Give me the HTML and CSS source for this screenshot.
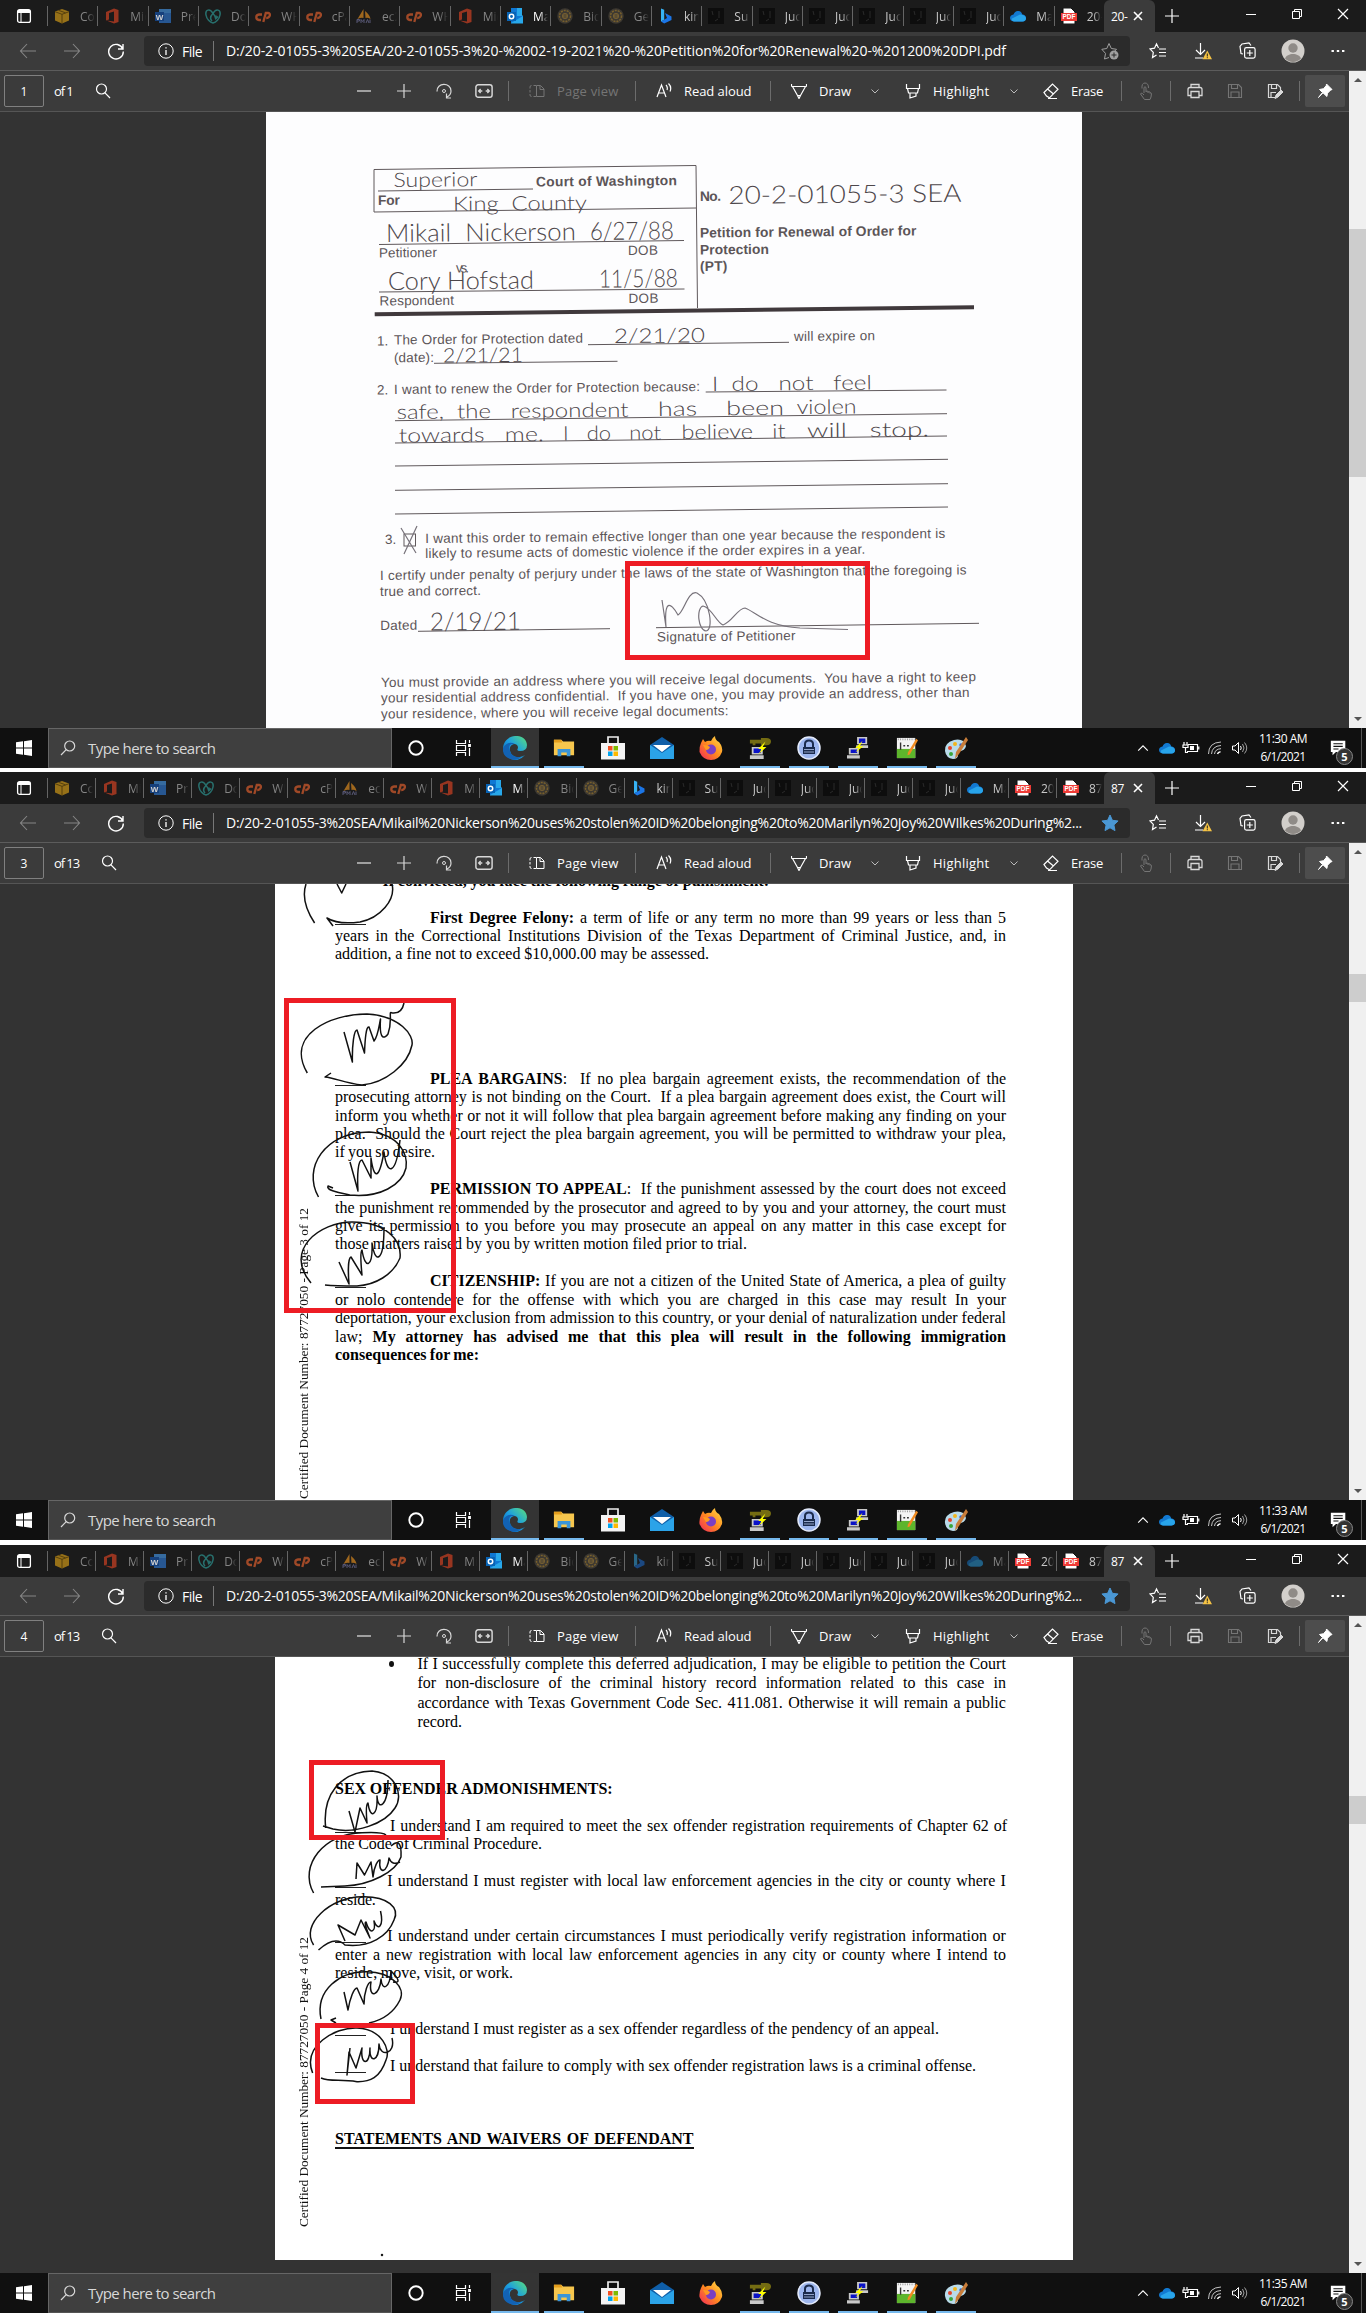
FILE: index.html
```html
<!DOCTYPE html>
<html lang="en">
<head>
<meta charset="utf-8">
<title>Documents</title>
<link rel="stylesheet" href="styles.css">
</head>
<body>
<svg class="defs" aria-hidden="true">
<defs>
<linearGradient id="gEdge" x1="0" y1="1" x2="1" y2="0"><stop offset="0" stop-color="#0c59a4"/><stop offset=".5" stop-color="#1b9de2"/><stop offset="1" stop-color="#5be07a"/></linearGradient>
<linearGradient id="gFox" x1="1" y1="0" x2="0" y2="1"><stop offset="0" stop-color="#ffe14a"/><stop offset=".5" stop-color="#ff8a1f"/><stop offset="1" stop-color="#f0245c"/></linearGradient>
</defs>
<symbol id="i-tabs" viewBox="0 0 16 16"><rect x="1.6" y="1.6" width="12.8" height="12.8" rx="2" stroke-width="1.3"/><path d="M2 3.500h12" stroke-width="3"/><path d="M5 4v10"/></symbol>
<symbol id="i-plus" viewBox="0 0 16 16"><path d="M8 1v14M1 8h14" stroke-width="1.2"/></symbol>
<symbol id="i-min" viewBox="0 0 16 16"><path d="M3 8.500h10"/></symbol>
<symbol id="i-minus" viewBox="0 0 16 16"><path d="M1 8h14" stroke-width="1.3"/></symbol>
<symbol id="i-max" viewBox="0 0 16 16"><path d="M3.500 5.500h7v7h-7zM5.500 5.500v-2h7v7h-2"/></symbol>
<symbol id="i-close" viewBox="0 0 16 16"><path d="M3 3l10 10M13 3L3 13" stroke-width="1.2"/></symbol>
<symbol id="i-x" viewBox="0 0 12 12"><path d="M2 2l8 8M10 2L2 10" stroke-width="1.6"/></symbol>
<symbol id="i-back" viewBox="0 0 18 16"><path d="M17 8H1.500M8 1L1.500 8L8 15" stroke-width="1.1"/></symbol>
<symbol id="i-fwd" viewBox="0 0 18 16"><path d="M1 8h15.500M10 1l6.500 7L10 15" stroke-width="1.1"/></symbol>
<symbol id="i-reload" viewBox="0 0 18 18"><path d="M15.800 7A7.300 7.300 0 1 0 16.300 9.500M16 2v5h-5" stroke-width="1.4"/></symbol>
<symbol id="i-info" viewBox="0 0 16 16"><circle cx="8" cy="8" r="7.200"/><path d="M8 7v5M8 4.200v1.300" stroke-width="1.300"/></symbol>
<symbol id="i-staradd" viewBox="0 0 18 18"><path d="M8 15.500l-4.500 1.500 1-5.600L.8 7.300l5-.8L8 1.500l2.300 5 5.200.8-2 2"/><circle cx="13" cy="13" r="4.500" fill="currentColor" stroke="none"/><path d="M13 10.500v5M10.500 13h5" stroke="#2b2b2b"/></symbol>
<symbol id="i-starfull" viewBox="0 0 18 18"><path d="M9 1l2.400 5.300 5.700.7-4.200 3.900 1.100 5.700L9 13.800l-5 2.800 1.100-5.700L.9 7l5.700-.7z" fill="#4a97d4" stroke="#4a97d4"/></symbol>
<symbol id="i-favs" viewBox="0 0 18 18"><path d="M9.500 6L7.500 1.800 5.500 6.200 1 7l3.300 3.400-.8 5.200L7.500 13M10 7h7M10 10.500h7M10 14h7" stroke-width="1.200"/></symbol>
<symbol id="i-down" viewBox="0 0 18 18"><path d="M6.500 1v11M2 8l4.500 4.500L11 8M1 16h8" stroke-width="1.200"/><path d="M13.300 8.500L18 17.300H8.500z" fill="#f5c344" stroke="none"/><path d="M13.300 11.500v3M13.300 15.200v1" stroke="#222"/></symbol>
<symbol id="i-coll" viewBox="0 0 18 18"><path d="M4 12L2 11.500 1 4.500 3 2l7-1 2 2.500" stroke-width="1.200"/><rect x="5.600" y="5.600" width="10.500" height="10.500" rx="1.800" stroke-width="1.200"/><path d="M10.800 8v6M7.800 11h6" stroke-width="1.200"/></symbol>
<symbol id="i-avatar" viewBox="0 0 24 24"><circle cx="12" cy="12" r="11.500" fill="#d2cfcb" stroke="none"/><circle cx="12" cy="9" r="4.700" fill="#8f8b87" stroke="none"/><path d="M4 19.500c2-6 14-6 16 0a11 11 0 0 1-16 0z" fill="#8f8b87" stroke="none"/></symbol>
<symbol id="i-dots" viewBox="0 0 16 16"><path d="M1.500 8h2.400M6.800 8h2.400M12 8h2.400" stroke-width="2.200"/></symbol>
<symbol id="i-search" viewBox="0 0 16 16"><circle cx="6.500" cy="6" r="5" stroke-width="1.200"/><path d="M10 9.800l5 5.200" stroke-width="1.200"/></symbol>
<symbol id="i-find" viewBox="0 0 16 16"><circle cx="9.700" cy="6" r="5" stroke-width="1.200"/><path d="M6.200 9.600L1 15" stroke-width="1.200"/></symbol>
<symbol id="i-rotate" viewBox="0 0 16 16"><path d="M1 8.500C.5-.8 15-.8 15 8c0 2.500-1.500 4.800-4 6M10.500 10.500V15h4.500" stroke-width="1.200"/><circle cx="8" cy="8" r="1.500"/></symbol>
<symbol id="i-fit" viewBox="0 0 16 16"><rect x=".8" y="2.500" width="14.400" height="11" rx="2" stroke-width="1.300"/><path d="M6.500 8H3.500M9.500 8h3M5 6.300L3.300 8 5 9.700M11 6.300L12.700 8 11 9.700" stroke-width="1.200"/></symbol>
<symbol id="i-pages" viewBox="0 0 16 16"><path d="M7 2.500H4.500M1 5.500v-1.500q0-1.500 1.500-1.500M1 7v2.500M1 11v1q0 1.500 1.500 1.500M4.500 13.500H7M7.500 2.500h4l3.500 3.500v7.500h-7.500zM11 2.500V6.500h4"/></symbol>
<symbol id="i-read" viewBox="0 0 16 16"><path d="M1 14L5.500 2 10 14M2.500 10h6M10 2q2 2 1 5M12.500.5q3.500 3.500 1.500 8" stroke-width="1.200"/></symbol>
<symbol id="i-pen" viewBox="0 0 16 16"><path d="M.5 1v2.500M15.500 1v2.500M.5 3.500h15M1.500 3.500L6.500 12.500h3L14.500 3.500M6.500 12.500l1.500 3 1.500-3" stroke-width="1.200"/></symbol>
<symbol id="i-marker" viewBox="0 0 16 16"><path d="M1.500 1v4.500h13V1M2.500 5.500l1 4.500h9l1-4.500M5 10v5l6-2v-3" stroke-width="1.200"/></symbol>
<symbol id="i-erase" viewBox="0 0 16 16"><path d="M1 9.500L9.500 1 15 6.200 6.500 14.800 3.500 13zM4.500 6l6 5M5 15.500h9" stroke-width="1.200"/></symbol>
<symbol id="i-hand" viewBox="0 0 16 18"><path d="M6 11V5.500q1-1.500 2 0V10M8 9.500q1.200-1 2 0v1.500M10 10q1.200-1 2 .3v1.200M12 11q1.200-.8 1.500.5L13 15l-1 2.500H6.500L2.500 12q.5-1.500 2-.5L6 13M4 6.500Q3.500 1 7 1t3.500 5"/></symbol>
<symbol id="i-print" viewBox="0 0 16 16"><path d="M4 4.500V1.500h8v3M4 12.500H1V6.500q0-2 2-2h10q2 0 2 2v6h-3M4 8.500h8v6H4z" stroke-width="1.300"/></symbol>
<symbol id="i-save" viewBox="0 0 16 16"><path d="M1.500 1.500h10l3 3v10h-13zM4.500 1.500v4h6v-4M4 14.500v-5.500h8v5.500" stroke-width="1.100"/></symbol>
<symbol id="i-saveas" viewBox="0 0 16 16"><path d="M8 14.500H1.500v-13h9l3 3V7M4.500 1.500v4h5v-4M4 14.500v-5h5" stroke-width="1.200"/><path d="M8 15.500l1-3.500 5-5 2 2-5 5z" fill="currentColor"/></symbol>
<symbol id="i-pin" viewBox="0 0 16 16"><path d="M9.500 1l5.500 5.500-1.500.7-3 3-.6 3.300L6 9.800 1.500 14.500 5.500 9.500 2.500 6.500l4-.8 2.700-3z" fill="currentColor"/></symbol>
<symbol id="i-chev" viewBox="0 0 10 10"><path d="M1.500 3.500L5 7l3.500-3.500"/></symbol>
<symbol id="i-up" viewBox="0 0 16 16"><path d="M2.500 11L8 5.500l5.500 5.500" stroke-width="1.300"/></symbol>
<symbol id="i-cortana" viewBox="0 0 18 18"><circle cx="9" cy="9" r="6.700" stroke-width="1.900"/></symbol>
<symbol id="i-task" viewBox="0 0 18 18"><path d="M1.500 1v3.500h9V1M1.500 17v-3.500h9V17M1.500 6.500h9v5h-9zM14.500 1v3M14.500 9v8" stroke-width="1.200"/><path d="M14.500 5v3" stroke-width="2.800"/></symbol>
<symbol id="i-batt" viewBox="0 0 18 14"><path d="M6 3.500h9.500v7H5M16.800 5.500v3M2 1v3M5 1v3M1 4h5v2.500H1zM3.500 7v4.500H6" stroke-width="1.200"/><path d="M8 5h4v4H8z" fill="currentColor" stroke="none"/></symbol>
<symbol id="i-wifi" viewBox="0 0 16 16"><path d="M1.500 14Q1.500 2.500 14 2M4.500 14Q5 6 14 5.500M7.500 14Q8 9 14 8.700" opacity=".75"/><path d="M10.500 14Q11 12 13.500 11.700" stroke-width="1.500"/></symbol>
<symbol id="i-vol" viewBox="0 0 17 16"><path d="M1.500 6h2.500L7.500 2.500v11L4 10H1.500zM9.500 6q1.500 2 0 4"/><path d="M11.500 4q3 4 0 8M13.500 2.500q4.500 5.500 0 11" opacity=".6"/></symbol>
<symbol id="f-box" viewBox="0 0 16 16"><path d="M1 3.500L8 1l7 2.500V12.500L8 15.500 1 12.500z" fill="#b68718"/><path d="M8 6v9.500M1 3.700L8 6.300l7-2.600M4.500 2.300l7 2.500" stroke="#65490b" fill="none"/></symbol>
<symbol id="f-office" viewBox="0 0 16 16"><path d="M2 4l8-3.500 4.500 1.500v12L10 15.500l-7.500-3 7.500 1V3.500L5 5v6.500L2 12.500z" fill="#b83c22"/></symbol>
<symbol id="f-word" viewBox="0 0 16 16"><path d="M4 1h12v14H4z" fill="#2b66b0"/><path d="M4 1h12v4H4z" fill="#3d7fc0"/><path d="M0 4h9v9H0z" fill="#164a95"/></symbol>
<symbol id="f-dad" viewBox="0 0 16 16"><path d="M8 5.500C5 0 0 1.500 1 7c.6 4 4 7.500 7 8 3-.5 6.400-4 7-8 1-5.500-4-7-7-1.500-3 3-3 5.500-1 7.500M8 5.500q3 3 2.500 5.500M11 7.500v3l2-2" fill="none" stroke="#2b8582" stroke-width="1.500"/></symbol>
<symbol id="f-cp" viewBox="0 0 16 16"><path d="M7 6.500H4q-2.700.3-2.700 2.700T4 12h2M8.300 14L10.800 5h2.400q2.200.3 1.600 2.700-.8 2.300-3.600 2.300" fill="none" stroke="#c2552b" stroke-width="2.300"/></symbol>
<symbol id="f-sail" viewBox="0 0 16 16"><path d="M7.500 1L1.500 11q4-2 6-1zM9 3q5 4 5.500 8-3-2-5-1z" fill="#c07a1e"/><path d="M1 15v-3.500h2.500v1.500H1m4 2v-3.500l1.500 2 1.500-2V15m2 0l1.500-3.500L13 15m1 0v-3.500" stroke="#67678c" fill="none"/></symbol>
<symbol id="f-outlook" viewBox="0 0 16 16"><path d="M4 0h11v7l1 1v7.500H4z" fill="#28a8ea"/><path d="M4 0h6v8h6l-12 7z" fill="#0f78d4"/><path d="M0 4h9v9H0z" fill="#0864b5"/><circle cx="4.500" cy="8.500" r="2.200" fill="none" stroke="#fff" stroke-width="1.500"/></symbol>
<symbol id="f-seal" viewBox="0 0 16 16"><circle cx="8" cy="8" r="7.700" fill="#454038"/><circle cx="8" cy="8" r="5.500" fill="none" stroke="#907130" stroke-dasharray="2 1" stroke-width="1.500"/><circle cx="8" cy="8" r="3" fill="#8f7238"/><path d="M6.500 7h3M6.500 9h3" stroke="#454038"/></symbol>
<symbol id="f-bing" viewBox="0 0 16 16"><path d="M3 .5l3.200 1.300v10L3 13.500z" fill="#37b3f4"/><path d="M7 5l6.500 3.500v3.500L6.200 15.500 3 13.500l6-3.500z" fill="#1b75e6"/></symbol>
<symbol id="f-dark" viewBox="0 0 16 16"><path d="M0 0h16v16H0z" fill="#0d0d0d"/><path d="M4 3l1 4M11 3v7M7 13l3-2" stroke="#2a2a2a"/></symbol>
<symbol id="f-cloud" viewBox="0 0 16 16"><path d="M4 13.500Q0 13 0 10t3.500-3.500Q5 2.500 8.500 3q3 .3 3.700 3.500 3.600 0 3.800 3.500 0 3.200-3.500 3.500z" fill="#1279d1"/><path d="M4 13.500Q1 13 2 10.500l8-4q5 0 6 3.500 0 3.200-3.500 3.500z" fill="#28a4ea"/></symbol>
<symbol id="f-pdf" viewBox="0 0 16 16"><path d="M2 0h8l4 4v12H2z" fill="#fff" stroke="#111"/><path d="M0 5h16v8H0z" fill="#ee3b36"/></symbol>
<symbol id="t-win" viewBox="0 0 16 16"><path d="M0 2.300l7-1v6.200H0zM8 1.200L16 0v7.500H8zM0 8.500h7v6.200l-7-1zM8 8.500h8V16l-8-1.200z" fill="#fff"/></symbol>
<symbol id="t-edge" viewBox="0 0 24 24"><path d="M0 12C1-3 23-4 24 9q0 6-7 6-4 0-2-3 0-4-4-4-5 1-4 7 2 7 10 6 3-.6 5-2Q16 26 9 23.500 0 20 0 12z" fill="url(#gEdge)"/><path d="M7 15q-3-8 5-7Q5 4 0 12q-1 9 9 11.500 6 1 9-2.500-9 1-11-6z" fill="#1262b4"/></symbol>
<symbol id="t-files" viewBox="0 0 24 24"><path d="M1 3h8l2 2h12v15H1z" fill="#f6c64d"/><path d="M1 3h8l1 3H1z" fill="#e39d1c"/><path d="M5 21v-8h14v8h-4v-4H9v4z" fill="#3a95d8"/></symbol>
<symbol id="t-store" viewBox="0 0 24 24"><path d="M7 7V1h10v6" fill="none" stroke="#eee" stroke-width="1.700"/><path d="M0 7h24v16.500H0z" fill="#f4f4f4"/><path d="M7 10h4.500v4.500H7z" fill="#f25022"/><path d="M12.500 10H17v4.500h-4.500z" fill="#7fba00"/><path d="M7 15.500h4.500V20H7z" fill="#00a4ef"/><path d="M12.500 15.500H17V20h-4.500z" fill="#ffb900"/></symbol>
<symbol id="t-mail" viewBox="0 0 24 24"><path d="M0 9L12 1l12 8v14H0z" fill="#0f5ea8"/><path d="M0 9l12 8 12-8v14H0z" fill="#2ba3e8"/><path d="M3 9h18l-9 7z" fill="#fff"/></symbol>
<symbol id="t-fox" viewBox="0 0 24 24"><path d="M2 7l2-4 2 3q3-2 6-1 1-3 4-5 0 4 4 6 4 5 3 10-3 8-11 8T.5 16Q0 11 2 7z" fill="url(#gFox)"/><circle cx="12" cy="13.500" r="5" fill="#7a3fc4"/><path d="M4 9q5 0 7 2-1 3-4 3" fill="#ff9a1f"/></symbol>
<symbol id="t-putkey" viewBox="0 0 24 24"><path d="M1 3h12V1h6q5 0 5 4t-5 4h-6V7H7v2H4V7H1z" fill="#746c12"/><path d="M3 11h12v8H3zM1 20h15v4H1z" fill="#c9c9c9"/><path d="M5 12.500h8v5H5z" fill="#0a12c8"/><path d="M18 5l-8 8h4l-4 6 9-8h-4z" fill="#ff0"/></symbol>
<symbol id="t-lock" viewBox="0 0 24 24"><circle cx="12" cy="12" r="11" fill="#9db6ee" stroke="#e3eafb" stroke-width="1.500"/><path d="M8 11V8q0-3.500 4-3.500T16 8v3" fill="none" stroke="#1b2b4d" stroke-width="2"/><path d="M6 11h12v7H6z" fill="#1b2b4d"/><path d="M7 13.500h10M7 16h10" stroke="#93a4c9"/></symbol>
<symbol id="t-putty" viewBox="0 0 24 24"><path d="M11 0h11v8H11zM10 9h13v3H10zM2 12h11v7H2zM0 20h14v3.500H0z" fill="#c9c9c9"/><path d="M13 1.500h7v5h-7zM4 13.500h7v4H4z" fill="#0a12c8"/><path d="M17 4l-8 8h4l-4 5 9-7h-4z" fill="#ff0"/></symbol>
<symbol id="t-note" viewBox="0 0 24 24"><path d="M1 1h20v22H1z" fill="#f4f4f4"/><path d="M1 13h20v10H1z" fill="#5db52c"/><path d="M5 6v8M8 9.500h2M12 9.500h2" stroke="#333" stroke-width="1.500"/><path d="M2 2.500h18" stroke="#999" stroke-dasharray="1 1.500" stroke-width="2"/><path d="M22 2l2 1.500L15 19l-2.500 1 .5-3z" fill="#f08c22"/></symbol>
<symbol id="t-paint" viewBox="0 0 24 24"><path d="M1 15Q0 7 10 4q10-2 12 6-1 5-7 5-3 1-1 4 0 4-5 4-7-1-8-8z" fill="#b9dbea"/><circle cx="6" cy="12" r="2" fill="#e4452c"/><circle cx="11" cy="8" r="2" fill="#f2b51c"/><circle cx="7" cy="18" r="2" fill="#3aa53a"/><circle cx="17" cy="9" r="1.700" fill="#2c62d6"/><path d="M22 1l2 3-9 14-4 5 1-7z" fill="#c87d3a"/></symbol>
<symbol id="t-notes" viewBox="0 0 20 20"><path d="M1 1h17v13H7l-4 4v-4H1z" fill="#fff"/><path d="M4 4.500h11M4 7.500h11M4 10.500h6" stroke="#111" stroke-width="1.200"/></symbol>
</svg>

<main class="stack">
<section class="screen" data-shot="0">
<div class="paper paper-form">
<svg class="scan" viewBox="266 112 816 616" width="816" height="616">
<g class="rules">
<path d="M374 169.500L696 165.500M374 169.500V212L696 208M696 165.500L697.500 308M378 191L533 189M379 244.500L684 240.500M379 292L684.500 289M588 344.700L789 342.300M434 363.300L617.500 361.300M705.700 392L946.500 390M395 420.700L947 413.700M395 443L947 436M395 466L948 459.300M395 490.300L948 483.700M395 514L948 507M418 631.300L610 628.700M656 627.700L979 623.300"/>
<path class="thick" d="M374.700 314.300L974 307.300"/>
<rect x="404" y="534" width="11.500" height="12"/>
</g>
<g class="bold">
<text x="536" y="186.500" textLength="141">Court of Washington</text>
<text x="378" y="205" textLength="22">For</text>
<text x="700" y="201" textLength="21">No.</text>
<text x="700" y="237.500" textLength="216.500">Petition for Renewal of Order for</text>
<text x="700" y="254.500" textLength="69">Protection</text>
<text x="700" y="271" textLength="27.500">(PT)</text>
</g>
<g class="body">
<text x="379" y="257.500" textLength="58">Petitioner</text>
<text x="628" y="255" textLength="30">DOB</text>
<text x="456" y="272.600" textLength="13">vs.</text>
<text x="379.600" y="305.500" textLength="74.500">Respondent</text>
<text x="628.500" y="303" textLength="30">DOB</text>
<text x="377" y="345.500">1.</text>
<text x="394" y="344.500" textLength="189">The Order for Protection dated</text>
<text x="794" y="341" textLength="81">will expire on</text>
<text x="394" y="362.300" textLength="40">(date):</text>
<text x="377" y="394.600">2.</text>
<text x="394" y="394" textLength="306">I want to renew the Order for Protection because:</text>
<text x="385" y="544">3.</text>
<text x="425.300" y="543" textLength="520">I want this order to remain effective longer than one year because the respondent is</text>
<text x="425.300" y="558" textLength="440">likely to resume acts of domestic violence if the order expires in a year.</text>
<text x="380" y="580" textLength="586.500">I certify under penalty of perjury under the laws of the state of Washington that the foregoing is</text>
<text x="380" y="596" textLength="101">true and correct.</text>
<text x="380.400" y="630" textLength="37">Dated</text>
<text x="657" y="641.500" textLength="138.500">Signature of Petitioner</text>
<text x="381" y="687" textLength="595" xml:space="preserve">You must provide an address where you will receive legal documents.  You have a right to keep</text>
<text x="381" y="702.500" textLength="588.500" xml:space="preserve">your residential address confidential.  If you have one, you may provide an address, other than</text>
<text x="381" y="718.500" textLength="347.600">your residence, where you will receive legal documents:</text>
</g>
<g class="hand">
<text x="393.500" y="187" textLength="84" lengthAdjust="spacingAndGlyphs">Superior</text>
<text x="453" y="211" textLength="134" lengthAdjust="spacingAndGlyphs">King&#160; County</text>
<text class="big" x="386" y="242" textLength="190" lengthAdjust="spacingAndGlyphs">Mikail&#160; Nickerson</text>
<text class="big" x="590" y="240" textLength="84" lengthAdjust="spacingAndGlyphs">6/27/88</text>
<text class="big" x="388" y="290" textLength="146" lengthAdjust="spacingAndGlyphs">Cory Hofstad</text>
<text class="big" x="599" y="287.500" textLength="79" lengthAdjust="spacingAndGlyphs">11/5/88</text>
<text class="big" x="728.600" y="204" textLength="233" lengthAdjust="spacingAndGlyphs">20-2-01055-3 SEA</text>
<text x="614" y="343" textLength="91" lengthAdjust="spacingAndGlyphs">2/21/20</text>
<text x="443" y="362.500" textLength="80" lengthAdjust="spacingAndGlyphs">2/21/21</text>
<text x="712" y="391" textLength="160" lengthAdjust="spacingAndGlyphs">I&#160; do&#160;&#160; not&#160;&#160; feel</text>
<text x="396.700" y="419" textLength="232" lengthAdjust="spacingAndGlyphs">safe,&#160; the&#160;&#160; respondent</text>
<text x="658" y="416" textLength="126" lengthAdjust="spacingAndGlyphs">has&#160;&#160;&#160; been</text>
<text x="796.700" y="414" textLength="60" lengthAdjust="spacingAndGlyphs">violen</text>
<text x="398.800" y="442.500" textLength="145" lengthAdjust="spacingAndGlyphs">towards&#160;&#160; me.</text>
<text x="563" y="440.500" textLength="98" lengthAdjust="spacingAndGlyphs">I&#160;&#160; do&#160;&#160; not</text>
<text x="681.600" y="439" textLength="104" lengthAdjust="spacingAndGlyphs">believe&#160;&#160; it</text>
<text x="807" y="437.500" textLength="122" lengthAdjust="spacingAndGlyphs">will&#160;&#160; stop.</text>
<text class="big" x="430" y="630.500" textLength="91" lengthAdjust="spacingAndGlyphs">2/19/21</text>
</g>
<path class="ink-gray" d="M401 528L416 553M417 526L404 554M662 600L666 627C664 600 670 601 678 615C684 612 688 590 697 593C710 600 714 630 706 631C698 630 696 608 703 606C712 608 716 622 723 625C732 622 738 608 745 608C756 612 766 626 800 628L848 629.500"/>
</svg>
<div class="mark mark-sign"></div>
</div>
</section>

<section class="screen" data-shot="1">
<div class="paper paper-plea">
<div class="copy copy-plea">
<p class="lead"><b class="ln" data-w="386.500">If convicted, you face the following range of punishment:</b></p>
<p><i class="blank"></i><span class="ln" data-w="576"><b>First Degree Felony:</b> a term of life or any term no more than 99 years or less than 5</span><br><span class="ln" data-w="671">years in the Correctional Institutions Division of the Texas Department of Criminal Justice, and, in</span><br><span class="ln" data-w="374">addition, a fine not to exceed $10,000.00 may be assessed.</span></p>
<p class="after-gap"><i class="blank"></i><span class="ln" data-w="576"><b>PLEA BARGAINS</b>:&nbsp; If no plea bargain agreement exists, the recommendation of the</span><br><span class="ln" data-w="671">prosecuting attorney is not binding on the Court.&nbsp; If a plea bargain agreement does exist, the Court will</span><br><span class="ln" data-w="671">inform you whether or not it will follow that plea bargain agreement before making any finding on your</span><br><span class="ln" data-w="671">plea.&nbsp; Should the Court reject the plea bargain agreement, you will be permitted to withdraw your plea,</span><br><span class="ln" data-w="100">if you so desire.</span></p>
<p><i class="blank"></i><span class="ln" data-w="576"><b>PERMISSION TO APPEAL</b>:&nbsp; If the punishment assessed by the court does not exceed</span><br><span class="ln" data-w="671">the punishment recommended by the prosecutor and agreed to by you and your attorney, the court must</span><br><span class="ln" data-w="671">give its permission to you before you may prosecute an appeal on any matter in this case except for</span><br><span class="ln" data-w="412">those matters raised by you by written motion filed prior to trial.</span></p>
<p><i class="blank"></i><span class="ln" data-w="576"><b>CITIZENSHIP:</b> If you are not a citizen of the United State of America, a plea of guilty</span><br><span class="ln" data-w="671">or nolo contendere for the offense with which you are charged in this case may result In your</span><br><span class="ln" data-w="671">deportation, your exclusion from admission to this country, or your denial of naturalization under federal</span><br><span class="ln" data-w="671">law; <b>My attorney has advised me that this plea will result in the following immigration</b></span><br><b class="ln" data-w="144">consequences for me:</b></p>
</div>
<div class="side side-plea"><span class="ln" data-h="291">Certified Document Number: 87727050 - Page 3 of 12</span></div>
<svg class="ink" viewBox="275 884 798 616" width="798" height="616">
<path d="M306 884C302 896 306 910 314.600 923M392 884C396 900 380 918 360 922C345 924 335 923 327 918L333 926M337 884L341.700 893L346 884"/>
<path d="M307.300 1073C285 1035 330 1014 367 1014C400 1016 414 1035 412 1045C408 1065 385 1083 362 1085C345 1083 335 1078 325 1077L331 1073M344 1032L352.400 1062C352 1045 354 1030 357 1030L364.500 1053C365 1040 366 1026 369 1027L374 1041C378 1036 379 1026 380.500 1019C379 1042 385 1038 388 1034C393 1020 388 1010 392 1013C400 1014 403 1008 404 1003"/>
<path d="M318.500 1197C302 1168 325 1132 369 1132C400 1134 408 1155 406 1168C402 1185 380 1198 350 1195C336 1192 326 1190 328 1186L333 1188M350 1162L358 1191C357 1175 358 1160 362 1160L371 1178L371 1158C374 1180 379 1180 384 1152C387 1176 396 1176 400 1140"/>
<path d="M311 1283C283 1250 320 1222 352 1222C386 1222 402 1240 400 1258C393 1275 375 1285 357 1286C345 1286 335 1286 325 1285M339 1262L349 1284C348 1272 348 1258 351 1257L362 1275C361 1265 360 1252 362 1250C365 1270 373 1268 372 1243C374 1262 384 1266 384 1227"/>
</svg>
<div class="mark mark-plea"></div>
</div>
</section>

<section class="screen" data-shot="2">
<div class="paper paper-adm">
<div class="copy copy-adm">
<p class="bullet"><span class="ln" data-w="588.500">If I successfully complete this deferred adjudication, I may be eligible to petition the Court</span><br><span class="ln" data-w="588.500">for non-disclosure of the criminal history record information related to this case in</span><br><span class="ln" data-w="588.500">accordance with Texas Government Code Sec. 411.081. Otherwise it will remain a public</span><br><span class="ln" data-w="44.500">record.</span></p>
<h2><span class="ln" data-w="277.700">SEX OFFENDER ADMONISHMENTS:</span></h2>
<p><i class="blank near"></i><span class="ln" data-w="617">I understand I am required to meet the sex offender registration requirements of Chapter 62 of</span><br><span class="ln" data-w="207">the Code of Criminal Procedure.</span></p>
<p><i class="blank nearer"></i><span class="ln" data-w="618.500">I understand I must register with local law enforcement agencies in the city or county where I</span><br><span class="ln" data-w="40.500">reside.</span></p>
<p><i class="blank nearer"></i><span class="ln" data-w="618.500">I understand under certain circumstances I must periodically verify registration information or</span><br><span class="ln" data-w="671">enter a new registration with local law enforcement agencies in any city or county where I intend to</span><br><span class="ln" data-w="178">reside, move, visit, or work.</span></p>
<p class="wide"><i class="blank near"></i><span class="ln" data-w="549">I understand I must register as a sex offender regardless of the pendency of an appeal.</span></p>
<p><i class="blank near"></i><span class="ln" data-w="586">I understand that failure to comply with sex offender registration laws is a criminal offense.</span></p>
<h2 class="under"><span class="ln" data-w="358.500">STATEMENTS AND WAIVERS OF DEFENDANT</span></h2>
</div>
<div class="side side-adm"><span class="ln" data-h="290">Certified Document Number: 87727050 - Page 4 of 12</span></div>
<svg class="ink" viewBox="275 1657 798 603" width="798" height="603">
<path d="M325.700 1828C322 1795 340 1772 372 1771C396 1773 404 1795 395 1808C385 1824 355 1834 333 1829L323 1826M349 1811L355 1832L360 1808L367 1823C366 1812 366 1804 368 1803C370 1820 378 1816 377 1796C378 1812 388 1806 388 1780"/>
<path d="M313.600 1893C298 1865 325 1833 362 1832.700C375 1832 384 1833 386 1835M391 1846Q402 1836 401 1857C396 1872 370 1885 345 1886L321 1887M356 1879L357 1863L364.500 1875L371 1862L373 1877C374 1866 378 1860 380 1860C378 1876 388 1872 389 1858Q392 1866 400 1862"/>
<path d="M313.600 1945C300 1925 330 1897 362 1896.700C388 1896 400 1908 394 1920C388 1936 370 1948 345 1945Q335 1935 318.500 1950M345 1941L338 1925L355 1935L361 1920L370 1938C366 1928 364 1922 366 1922C370 1936 376 1932 374 1921C378 1932 384 1926 380.500 1911"/>
<path d="M321 2019C315 1990 340 1971 367 1971.700C392 1972 406 1988 400 2000C394 2012 383 2020 369 2023M336 2018L331 2020L336 2023M344 1992L348 2010C350 1998 354 1988 357 1988L364 2004C364 1992 368 1982 371 1982C368 2000 380 1996 381 1979C382 1992 390 1988 391 1971Q404 1984 393 1982"/>
<path d="M312.600 2073C302 2046 335 2027 357 2028C382 2029 391 2050 386 2060C380 2078 370 2082 357 2081.700C340 2079 330 2082 321 2078M350 2048L347 2075L349 2052L356 2068L362 2048C360 2066 370 2066 370 2048C369 2064 379 2062 379 2044C380 2058 396 2054 392 2038"/>
<circle cx="382" cy="2255" r=".5"/>
</svg>
<div class="mark mark-adm-a"></div>
<div class="mark mark-adm-b"></div>
</div>
</section>
</main>
<script src="app.js"></script>
</body>
</html>
```
FILE: styles.css
```css
* { box-sizing: border-box; }
body { margin: 0; background: #fff; font-family: "Open Sans", "Noto Sans", sans-serif; font-size: 13px; color: #fff; }
.defs { position: absolute; width: 0; height: 0; }
svg { display: block; flex: none; }
.line-icon { fill: none; stroke: currentColor; }
.icon-label { font-family: "Liberation Sans", sans-serif; font-weight: 700; fill: #fff; }
.stack { display: flex; flex-direction: column; width: 1366px; }
.screen { display: flex; flex-direction: column; height: 768px; overflow: hidden; margin-bottom: 4px; }
.screen + .screen { margin-bottom: 5px; }
.screen:last-child { margin-bottom: 0; }
.ln { display: inline-block; white-space: nowrap; }

/* tab strip */
.tabs { display: flex; height: 32px; background: #1b1b1b; align-items: stretch; }
.tab-menu { width: 47px; display: flex; align-items: center; padding-left: 16px; }
.tab-list { display: grid; grid-auto-flow: column; grid-auto-columns: 1fr; width: 1057px; }
.tab { position: relative; display: flex; align-items: center; gap: 10px; padding-left: 7px; overflow: hidden; color: #c8c8c8; font-size: 12px; white-space: nowrap; }
.tab::before { content: ""; position: absolute; left: 0; top: 6px; width: 1px; height: 20px; background: #656565; }
.tab span { flex: 1; overflow: hidden; margin-right: 2px; -webkit-mask-image: linear-gradient(90deg, #000 45%, transparent); mask-image: linear-gradient(90deg, #000 45%, transparent); }
.tab.asleep { color: #858585; }
.tab.asleep svg { opacity: .8; }
.tab.lit { color: #fff; }
.tab.dim svg { opacity: .5; }
.tab-active { display: flex; align-items: center; justify-content: space-between; width: 51px; padding: 0 11px 0 7px; background: #3b3b3b; border-radius: 6px 6px 0 0; font-size: 12px; letter-spacing: -.3px; }
.tab-new { width: 34px; display: grid; place-items: center; }
.win { margin-left: auto; display: flex; padding-bottom: 4px; }
.win > * { width: 46px; display: grid; place-items: center; }

/* address bar */
.address { display: flex; align-items: center; height: 38px; background: #3b3b3b; padding-left: 6px; }
.nav { width: 44px; display: grid; place-items: center; }
.nav.off { color: #868686; }
.field { display: flex; align-items: center; width: 986px; height: 30px; margin-left: 6px; padding-left: 14px; border-radius: 4px; background: #2b2b2b; font-size: 14px; }
.field .scheme { margin-left: 8px; width: 31px; }
.field .url { flex: 1; padding-left: 13px; }
.field .url::before { content: ""; float: left; width: 1px; height: 20px; margin-left: -13px; background: #777; }
.field .star { width: 40px; display: grid; place-items: center; color: #a0a0a0; }
.acts { display: flex; padding-left: 5px; }
.acts > * { width: 45px; display: grid; place-items: center; }

/* viewer row: toolbar, page canvas and scrollbar */
.viewer { flex: 1; display: flex; min-height: 0; border-top: 1px solid #5c5c5c; }
.pane { flex: 1; display: flex; flex-direction: column; min-width: 0; background: #333; }
.tools { display: flex; align-items: center; height: 41px; background: #3b3b3b; border-bottom: 1px solid #555; padding-left: 4px; }
.pager { display: flex; align-items: center; width: 340px; }
.pageno { width: 40px; height: 32px; border: 1px solid #808080; border-radius: 2px; display: grid; place-items: center; font-size: 12px; }
.pagetotal { margin: 0 22px 0 10px; }
.btn { width: 40px; height: 32px; display: grid; place-items: center; border-radius: 2px; color: #d8d8d8; }
.btn.off, .tool.off { color: #757575; }
.btn.pin { background: #4d4d4d; color: #fff; margin-left: 1px; }
.sep { width: 9px; height: 20px; display: flex; justify-content: center; }
.sep::before { content: ""; width: 1px; background: #6c6c6c; }
.tool { display: flex; align-items: center; gap: 12px; padding-left: 16px; }
.t-page { width: 118px; } .t-read { width: 126px; } .t-draw { width: 114px; } .t-high { width: 138px; } .t-erase { width: 90px; }
.tool .chev { margin-left: 7px; color: #bbb; }
.canvas { flex: 1; display: flex; overflow: hidden; min-height: 0; }
.scroll { width: 17px; background: #f0f0f0; display: flex; flex-direction: column; align-items: center; position: relative; }
.scroll::before { content: ""; margin-top: 7px; border: 4px solid transparent; border-top: 0; border-bottom: 4px solid #555; }
.scroll::after { content: ""; margin-top: auto; margin-bottom: 7px; border: 4px solid transparent; border-bottom: 0; border-top: 4px solid #555; }
.thumb { position: absolute; width: 17px; background: #cdcdcd; }
.shot-0 .thumb { top: 158px; height: 248px; }
.shot-1 .thumb { top: 131px; height: 28px; }
.shot-2 .thumb { top: 180px; height: 28px; }

/* taskbar */
.taskbar { display: flex; height: 40px; background: #101010; }
.start { width: 48px; display: grid; place-items: center; }
.find { width: 344px; display: flex; align-items: center; gap: 12px; padding-left: 11px; background: #3f3f3f; border: 1px solid #666; border-bottom-color: #555; color: #d8d8d8; font-size: 15px; }
.slot { width: 48px; display: grid; place-items: center; }
.apps { display: flex; gap: 1px; margin-left: 3px; }
.app { width: 48px; display: grid; place-items: center; }
.app.open { background: linear-gradient(#76b9ed, #76b9ed) center bottom / 40px 2px no-repeat; }
.app.current { background: linear-gradient(#76b9ed, #76b9ed) center bottom / 48px 2px no-repeat, #343434; }
.tray { margin-left: auto; display: flex; align-items: center; }
.tray > * { width: 24px; display: grid; place-items: center; }
.tray .clock { width: 64px; font-size: 12px; line-height: 18px; text-align: center; padding-bottom: 1px; }
.tray .note { position: relative; width: 46px; height: 40px; }
.badge { position: absolute; left: 21px; top: 20px; width: 17px; height: 17px; border-radius: 50%; background: #333; border: 1px solid #888; font-size: 11px; line-height: 15px; text-align: center; }
.tray .peek { width: 5px; height: 40px; border-left: 1px solid #555; }

/* pages */
.paper { position: relative; background: #fff; color: #111; overflow: hidden; flex: none; }
.paper-form { width: 816px; margin-left: 266px; background: #fdfdfe; }
.paper-plea { width: 798px; margin-left: 275px; }
.paper-adm { width: 798px; height: 603px; margin-left: 275px; }
.scan text { font-family: "Liberation Sans", Arial, sans-serif; font-size: 13.5px; fill: #5c5558; transform-box: fill-box; transform-origin: 0 100%; transform: rotate(-.55deg); }
.scan .bold text { font-weight: 700; font-size: 13.8px; }
.scan .hand text { font-family: Lato, "Open Sans", sans-serif; font-weight: 300; font-size: 20px; fill: #4d474b; }
.scan .hand .big { font-size: 25px; }
.rules { fill: none; stroke: #5f585b; stroke-width: 1; }
.rules .thick { stroke: #40393c; stroke-width: 4; }
.ink-gray { fill: none; stroke: #77727a; stroke-width: 1.2; }
.copy { font-family: "Liberation Serif", "Times New Roman", serif; font-size: 16px; line-height: 18.4px; padding-left: 60px; white-space: nowrap; color: #000; }
.copy p { margin: 0 0 18.5px; }
.copy h2 { font-size: inherit; margin: 0 0 19px; }
.copy .ln { vertical-align: baseline; }
.copy-plea { margin-top: -12.4px; }
.copy .lead { padding-left: 47.5px; }
.copy .after-gap { margin-top: 106px; }
.blank { display: inline-block; width: 31px; height: 2px; margin-right: 64px; border-bottom: 1px solid #222; vertical-align: -2px; }
.blank.near { margin-right: 24px; }
.blank.nearer { margin-right: 21.3px; }
.copy-adm { margin-top: -3.2px; }
.copy .bullet { position: relative; margin: 0 0 48.6px; padding-left: 82.4px; line-height: 19.5px; }
.bullet::before { content: ""; position: absolute; left: 54px; top: 7px; width: 5px; height: 6px; border-radius: 50%; background: #111; }
.copy-adm h2 + p { margin-top: -1px; }
.copy .wide { margin-top: 37px; }
.copy .under { margin-top: 55px; }
.under .ln { border-bottom: 2px solid #111; line-height: 17px; }
.side { position: absolute; left: 21px; width: 16px; writing-mode: vertical-rl; transform: rotate(180deg); font-family: "Liberation Serif", serif; font-size: 13.3px; line-height: 16px; }
.side-plea { top: 324px; height: 291px; }
.side-adm { top: 279.500px; height: 290px; }
.ink { position: absolute; left: 0; top: 0; fill: none; stroke: #111; stroke-width: 1.5; stroke-linejoin: round; }
.mark { position: absolute; border: 5px solid #ed1c24; }
.mark-sign { left: 359px; top: 449px; width: 245px; height: 99px; }
.mark-plea { left: 9px; top: 114px; width: 172px; height: 315px; }
.mark-adm-a { left: 34px; top: 103px; width: 136px; height: 80px; }
.mark-adm-b { left: 40px; top: 366px; width: 100px; height: 81px; }
```
FILE: app.js
```js
const labels = {
  'f-word': '<text class="icon-label" x="0.800" y="11.500" font-size="8">W</text>',
  'f-pdf': '<text class="icon-label" x="1.500" y="11.300" font-size="6.400">PDF</text>'
};
const icon = (id, w = 16, h = w) =>
  `<svg class="${id.startsWith('i-') ? 'line-icon' : ''}" width="${w}" height="${h}"><use href="#${id}"/>${labels[id] || ''}</svg>`;

const baseTabs = [
  ['f-box', 'Co', 'asleep'], ['f-office', 'Mic', 'asleep'], ['f-word', 'Pre', 'asleep'], ['f-dad', 'Do', 'asleep'],
  ['f-cp', 'WH', 'asleep'], ['f-cp', 'cPa', 'asleep'], ['f-sail', 'ec2', 'asleep'], ['f-cp', 'WH', 'asleep'],
  ['f-office', 'Mic', 'asleep'], ['f-outlook', 'Ma', 'lit'], ['f-seal', 'Bid', 'asleep'], ['f-seal', 'Ge', 'asleep'],
  ['f-bing', 'kin', ''], ['f-dark', 'Su', ''], ['f-dark', 'Juc', ''], ['f-dark', 'Juc', ''], ['f-dark', 'Juc', ''],
  ['f-dark', 'Juc', ''], ['f-dark', 'Juc', ''], ['f-cloud', 'Ma', ''], ['f-pdf', '20-', '']
];

const longUrl = 'D:/20-2-01055-3%20SEA/Mikail%20Nickerson%20uses%20stolen%20ID%20belonging%20to%20Marilyn%20Joy%20WIlkes%20During%2...';
const shots = [
  { tabs: baseTabs, active: '20-', page: 1, total: 'of 1', totalW: 18.5, star: 'i-staradd', time: '11:30 AM',
    url: 'D:/20-2-01055-3%20SEA/20-2-01055-3%20-%2002-19-2021%20-%20Petition%20for%20Renewal%20-%201200%20DPI.pdf', urlW: 780, viewOff: 'off' },
  { tabs: [...baseTabs, ['f-pdf', '87', '']], active: '87', page: 3, total: 'of 13', totalW: 25, star: 'i-starfull', time: '11:33 AM', url: longUrl, urlW: 856, viewOff: '' },
  { tabs: [...baseTabs, ['f-pdf', '87', '']].map(t => t[0] === 'f-bing' || t[0] === 'f-cloud' ? [t[0], t[1], 'asleep dim'] : t),
    active: '87', page: 4, total: 'of 13', totalW: 25, star: 'i-starfull', time: '11:35 AM', url: longUrl, urlW: 856, viewOff: '' }
];

const text = (s, w) => `<span class="ln" data-w="${w}">${s}</span>`;
const sep = '<i class="sep"></i>';

const header = s => `
<div class="tabs">
  <div class="tab-menu">${icon('i-tabs')}</div>
  <div class="tab-list">${s.tabs.map(([f, t, c]) => `<div class="tab ${c}">${icon(f)}<span>${t}</span></div>`).join('')}</div>
  <div class="tab-active">${s.active}${icon('i-x', 12)}</div>
  <div class="tab-new">${icon('i-plus')}</div>
  <div class="win"><i>${icon('i-min')}</i><i>${icon('i-max')}</i><i>${icon('i-close')}</i></div>
</div>
<div class="address">
  <div class="nav off">${icon('i-back', 18, 16)}</div><div class="nav off">${icon('i-fwd', 18, 16)}</div><div class="nav">${icon('i-reload', 18)}</div>
  <div class="field">${icon('i-info')}<span class="scheme">${text('File', 20)}</span><span class="url">${text(s.url, s.urlW)}</span><span class="star">${icon(s.star, 18)}</span></div>
  <div class="acts"><i>${icon('i-favs', 18)}</i><i>${icon('i-down', 18)}</i><i>${icon('i-coll', 18)}</i><i>${icon('i-avatar', 24)}</i><i>${icon('i-dots')}</i></div>
</div>`;

const tools = s => `
<div class="tools">
  <div class="pager"><span class="pageno">${s.page}</span><span class="pagetotal">${text(s.total, s.totalW)}</span>${icon('i-search')}</div>
  <i class="btn">${icon('i-minus')}</i><i class="btn">${icon('i-plus')}</i><i class="btn">${icon('i-rotate')}</i><i class="btn">${icon('i-fit', 18)}</i>${sep}
  <div class="tool t-page ${s.viewOff}">${icon('i-pages')}${text('Page view', 61.5)}</div>${sep}
  <div class="tool t-read">${icon('i-read')}${text('Read aloud', 67.5)}</div>${sep}
  <div class="tool t-draw">${icon('i-pen')}${text('Draw', 32)}<i class="chev">${icon('i-chev', 10)}</i></div>
  <div class="tool t-high">${icon('i-marker')}${text('Highlight', 56.5)}<i class="chev">${icon('i-chev', 10)}</i></div>
  <div class="tool t-erase">${icon('i-erase')}${text('Erase', 32)}</div>${sep}
  <i class="btn off">${icon('i-hand', 16, 18)}</i>${sep}<i class="btn">${icon('i-print')}</i><i class="btn off">${icon('i-save')}</i><i class="btn">${icon('i-saveas')}</i>${sep}
  <i class="btn pin">${icon('i-pin')}</i>
</div>`;

const apps = [
  ['t-edge', 'current', 24], ['t-files', 'open', 22], ['t-store', '', 24], ['t-mail', '', 24], ['t-fox', '', 24],
  ['t-putkey', 'open', 22], ['t-lock', 'open', 24], ['t-putty', 'open', 22], ['t-note', 'open', 22], ['t-paint', 'open', 24]
];

const taskbar = s => `
<div class="taskbar">
  <div class="start">${icon('t-win')}</div>
  <div class="find">${icon('i-find')}${text('Type here to search', 127.5)}</div>
  <div class="slot">${icon('i-cortana', 18)}</div><div class="slot">${icon('i-task', 18)}</div>
  <div class="apps">${apps.map(([id, state, size]) => `<i class="app ${state}">${icon(id, size)}</i>`).join('')}</div>
  <div class="tray"><i>${icon('i-up', 14)}</i><i>${icon('f-cloud')}</i><i>${icon('i-batt', 18, 14)}</i><i>${icon('i-wifi')}</i><i>${icon('i-vol', 17, 16)}</i>
    <div class="clock"><div>${text(s.time, 48)}</div><div>${text('6/1/2021', 45)}</div></div>
    <div class="note">${icon('t-notes', 17)}<b class="badge">5</b></div><i class="peek"></i></div>
</div>`;

document.querySelectorAll('.screen').forEach((el, n) => {
  const s = shots[n];
  const paper = el.querySelector('.paper');
  el.classList.add('shot-' + n);
  el.innerHTML = header(s) + `<div class="viewer"><div class="pane">${tools(s)}<div class="canvas"></div></div><div class="scroll"><div class="thumb"></div></div></div>` + taskbar(s);
  el.querySelector('.canvas').append(paper);
});

// Set each line to its measured length: page copy stretches between words, labels between letters.
document.querySelectorAll('.ln').forEach(el => {
  const vertical = el.dataset.h;
  const target = +(vertical || el.dataset.w);
  const box = el.getBoundingClientRect();
  const extra = target - (vertical ? box.height : box.width);
  const chars = el.textContent.length;
  const gaps = (el.textContent.match(/[ \u00a0]/g) || []).length;
  if (el.closest('.copy') && gaps && extra > -gaps * 0.8) el.style.wordSpacing = extra / gaps + 'px';
  else el.style.letterSpacing = extra / chars + 'px';
});
```
